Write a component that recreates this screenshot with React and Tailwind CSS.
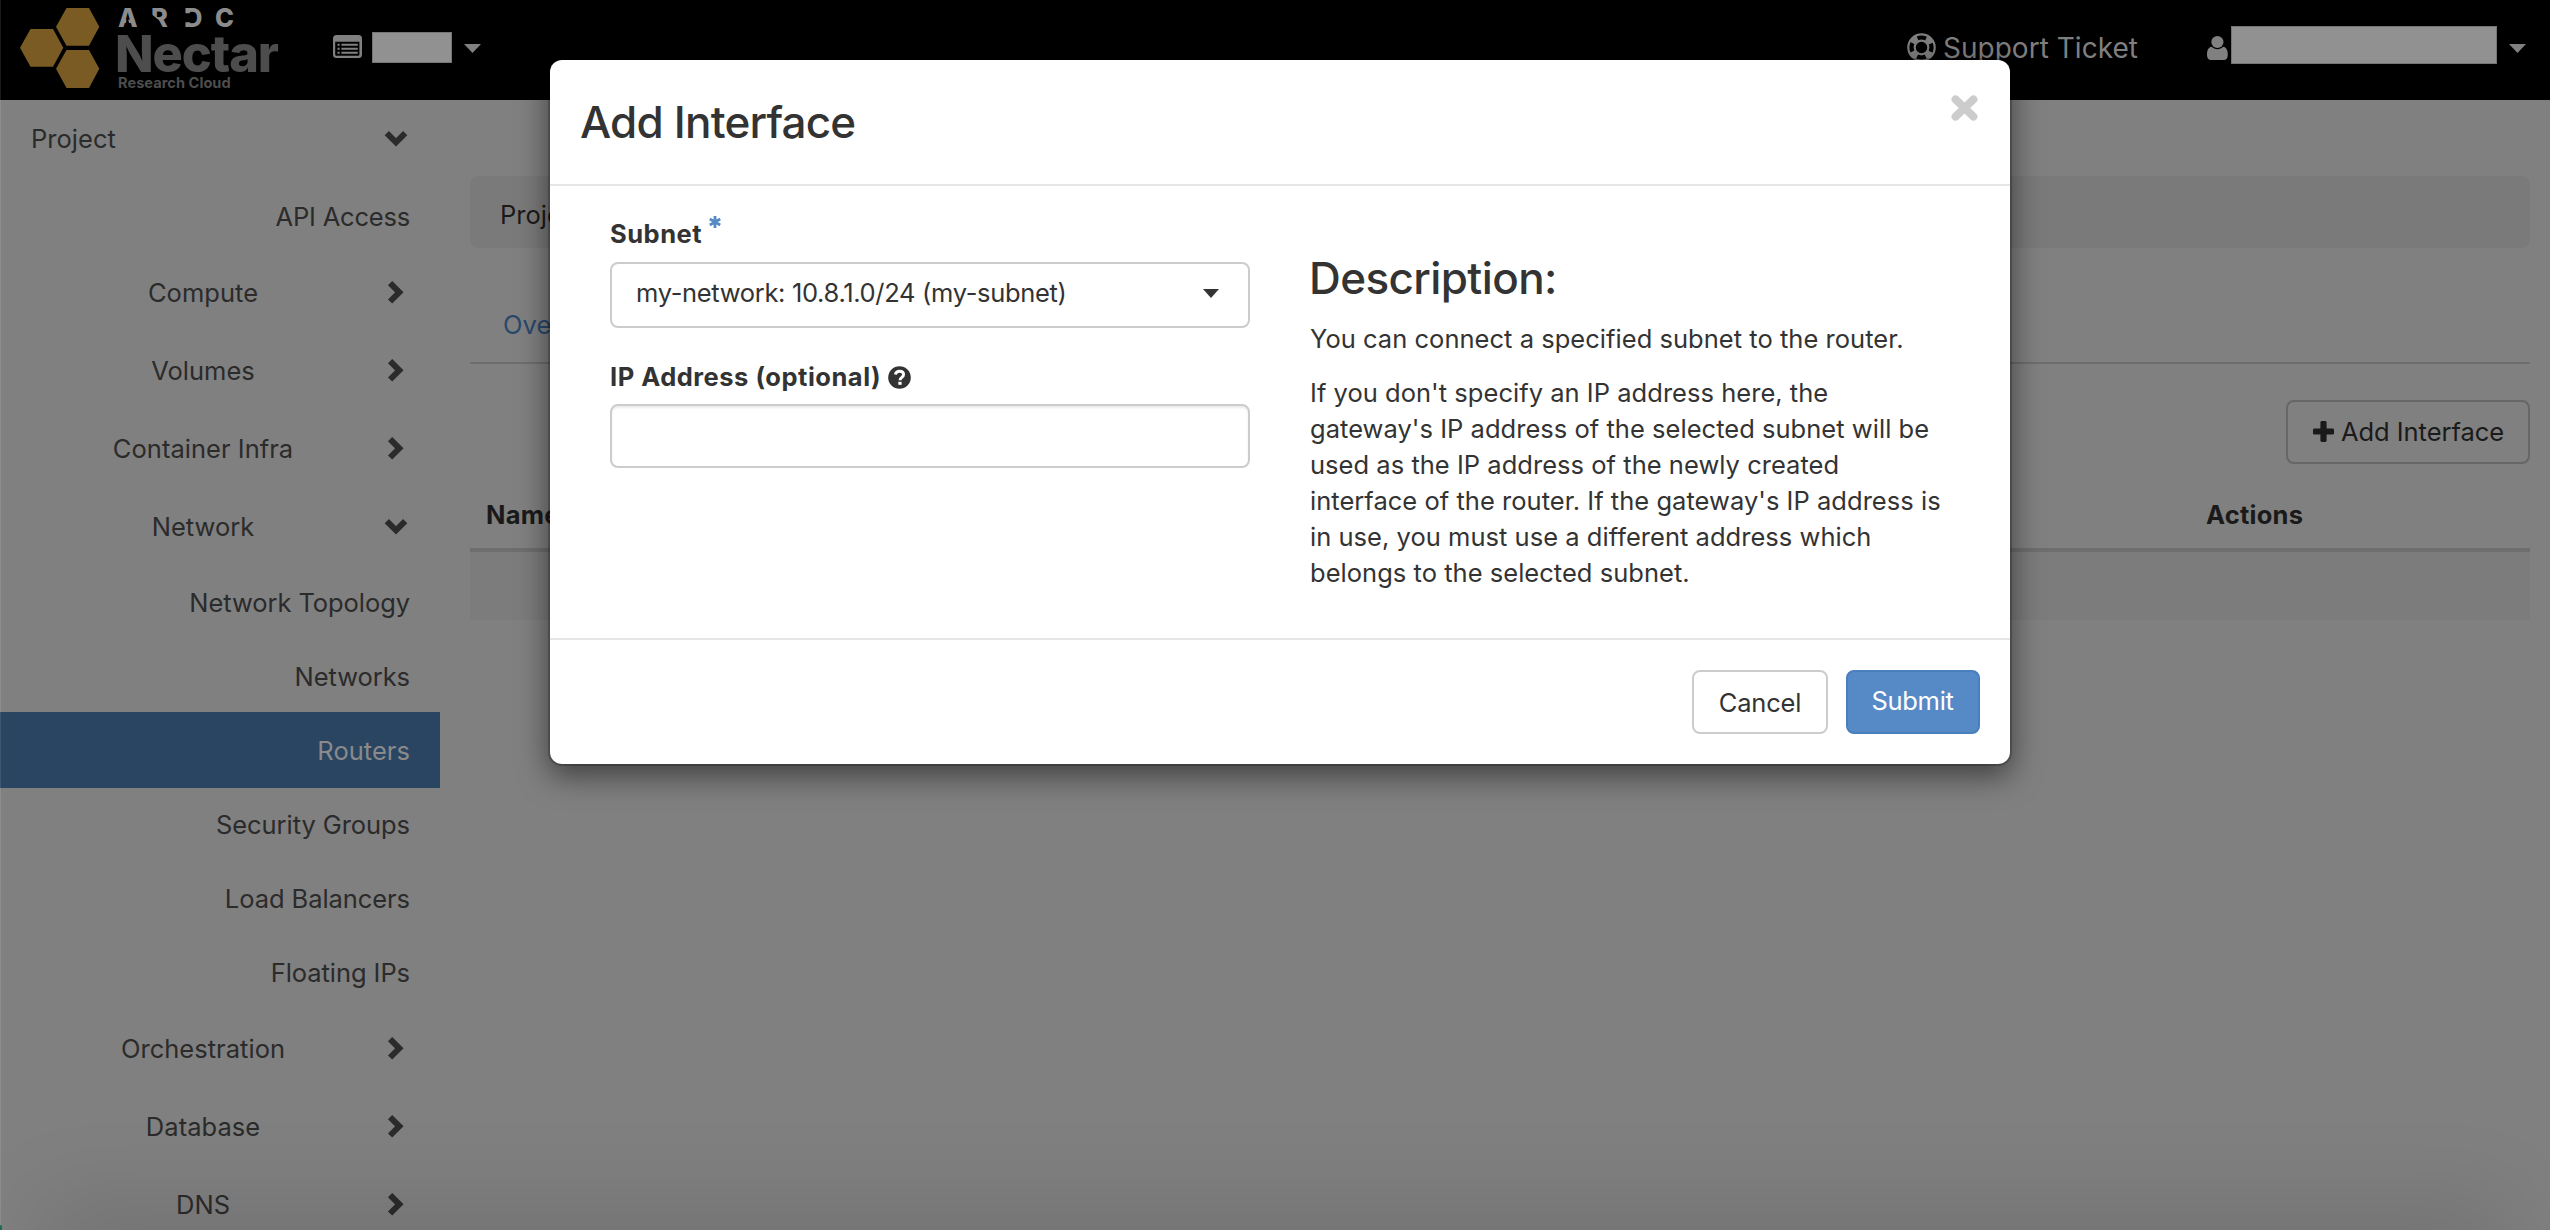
const FONT = "font-['Inter','Liberation_Sans',sans-serif]";

function ChevronRight() {
  return (
    <svg className="ml-2 size-6 shrink-0" viewBox="0 0 24 24" fill="none" stroke="#2b2b2b" strokeWidth="6">
      <path d="M6.1 2.1L15.3 11.3L6.1 20.5" />
    </svg>
  );
}

function ChevronDown() {
  return (
    <svg className="ml-2 size-6 shrink-0" viewBox="0 0 24 24" fill="none" stroke="#2b2b2b" strokeWidth="6">
      <path d="M2.8 6.1L12 15.3L21.2 6.1" />
    </svg>
  );
}

function Group({ label, open }) {
  return (
    <div className="flex h-[78px] shrink-0 items-center">
      <span className="ml-[30px] w-[346px] text-center">{label}</span>
      {open ? <ChevronDown /> : <ChevronRight />}
    </div>
  );
}

function Leaf({ label }) {
  return <div className="flex h-[74px] shrink-0 items-center justify-end pr-[30px] tracking-[-0.07px]">{label}</div>;
}

function Logo() {
  return (
    <div className="flex h-[100px] w-[290px] shrink-0">
      <svg className="ml-5 mt-2 h-[80px] w-[80px] shrink-0" viewBox="0 0 80 80" fill="#7a5b24">
        <path d="M46.5 0H69L79.3 18.8L69 37.8H46.5L36 18.8Z" />
        <path d="M46.5 42H69L79.3 60.8L69 80H46.5L36 60.8Z" />
        <path d="M10.5 21H33L43.3 39.8L33 58.8H10.5L0 39.8Z" />
      </svg>
      <div className="ml-[18px] flex flex-col">
        <div className="mt-[4px] grid h-[27px] grid-cols-[33px_33px_31px_20px] text-[25.5px] font-extrabold leading-[27px] text-[#8c8c8c]">
          <span className="[clip-path:polygon(0_0,100%_0,100%_100%,13px_100%,9.4px_45%,6px_100%,0_100%)]">A</span>
          <span className="[clip-path:polygon(0_0,100%_0,100%_100%,8px_100%,8px_60%,0_36%)]">R</span>
          <span className="[clip-path:polygon(0_0,100%_0,100%_100%,0_100%,0_68%,8px_68%,8px_34%,0_34%)]">D</span>
          <span>C</span>
        </div>
        <div className="-ml-[3px] h-[44px] text-[50.5px] font-extrabold leading-[46px] tracking-[-1.1px] text-[#4d4d4d]">Nectar</div>
        <div className="mt-px whitespace-nowrap text-[14.6px] font-bold leading-[14px] text-[#4d4d4d]">Research Cloud</div>
      </div>
    </div>
  );
}

function Caret({ className, color }) {
  return (
    <svg className={className} viewBox="0 0 17 9" preserveAspectRatio="none" fill={color}>
      <path d="M0 0H17L8.5 9Z" />
    </svg>
  );
}

function Header() {
  return (
    <header className="flex h-[100px] shrink-0 bg-black text-[#7f7f7f]">
      <Logo />
      <svg className="ml-[43px] mt-[35px] h-[23px] w-[29px]" viewBox="0 0 29 23">
        <rect width="29" height="23" rx="3.5" fill="#808080" />
        <path d="M2.2 6.8H26.4V19.6A1.2 1.2 0 0 1 25.2 20.8H3.4A1.2 1.2 0 0 1 2.2 19.6Z" fill="#000" />
        <path d="M4.5 9.8H6.6M8.4 9.8H24.8M4.5 13.8H6.6M8.4 13.8H24.8M4.5 17.8H6.6M8.4 17.8H24.8" stroke="#808080" strokeWidth="2" />
      </svg>
      <div className="ml-[10px] mt-8 h-[31px] w-[80px] border border-[#757575] bg-[#919191]" />
      <Caret className="ml-3 mt-11 h-[9px] w-[17px]" color="#808080" />
      <div className="ml-auto flex">
        <svg className="mt-[33px] size-[29px]" viewBox="0 0 29 29" fill="none" stroke="#7f7f7f">
          <circle cx="14.5" cy="14.5" r="13.2" strokeWidth="2.2" />
          <circle cx="14.5" cy="14.5" r="6.8" strokeWidth="2.2" />
          <circle cx="14.5" cy="14.5" r="10" strokeWidth="6" strokeDasharray="7 8.708" strokeDashoffset="-4.354" />
        </svg>
        <span className="ml-[7px] mt-[30px] whitespace-nowrap text-[28px] leading-[36px]">Support Ticket</span>
        <svg className="ml-[69px] mt-9 h-6 w-[21px]" viewBox="0 0 21 24" fill="#808080">
          <ellipse cx="10.4" cy="6" rx="6.1" ry="6" />
          <path d="M4.6 10.8C6 12.4 8.2 13.2 10.4 13.2S14.8 12.4 16.2 10.8C19.8 11.3 20.8 15 20.8 19C20.8 22 19.4 24 16.6 24H4.2C1.4 24 0 22 0 19C0 15 1 11.3 4.6 10.8Z" />
        </svg>
        <div className="ml-[3px] mt-[26px] h-[38px] w-[266px] border border-[#757575] bg-[#919191]" />
        <Caret className="ml-3 mr-6 mt-11 h-[9px] w-[17px]" color="#808080" />
      </div>
    </header>
  );
}

function Sidebar() {
  return (
    <nav className="flex w-[440px] shrink-0 flex-col text-[#2b2b2b]">
      <div className="flex h-[78px] shrink-0 items-center">
        <span className="ml-[31px] w-[345px]">Project</span>
        <ChevronDown />
      </div>
      <div className="flex h-[76px] shrink-0 items-center justify-end pr-[30px] pt-px tracking-[-0.2px]">API Access</div>
      <Group label="Compute" />
      <Group label="Volumes" />
      <Group label="Container Infra" />
      <Group label="Network" open />
      <Leaf label="Network Topology" />
      <Leaf label="Networks" />
      <div className="-mt-0.5 flex h-[76px] shrink-0 items-center justify-end bg-[#2a4562] pr-[30px] pt-px text-[#8a8a8a]">Routers</div>
      <Leaf label="Security Groups" />
      <Leaf label="Load Balancers" />
      <Leaf label="Floating IPs" />
      <Group label="Orchestration" />
      <Group label="Database" />
      <Group label="DNS" />
    </nav>
  );
}

function Content() {
  return (
    <main className="flex min-w-0 flex-1 flex-col pl-[30px] pr-5 pt-[76px] text-[#1a1a1a]">
      <div className="flex h-[72px] items-center rounded-lg bg-[#7a7a7a] px-[30px] pt-[5px]">Project</div>
      <div className="mt-[38px] flex h-[78px] items-center border-b-2 border-[#6e6e6e] pl-[33px] pt-px text-[#29486c]">Overview</div>
      <div className="mt-9 flex justify-end">
        <div className="flex h-16 w-[244px] items-center rounded-lg border-2 border-[#666] pl-[25px]">
          <svg className="mb-0.5 size-[21px]" viewBox="0 0 21 21" fill="#1a1a1a">
            <rect x="7.4" width="6.2" height="21" rx="1.4" />
            <rect y="7.4" width="21" height="6.2" rx="1.4" />
          </svg>
          <span className="ml-[7px] tracking-[-0.05px]">Add Interface</span>
        </div>
      </div>
      <div className="grid h-[88px] grid-cols-[1720px_1fr] items-center border-b-4 border-[#6e6e6e] pt-[17px] font-bold tracking-[0.25px]">
        <span className="pl-4">Name</span>
        <span className="pl-4">Actions</span>
      </div>
      <div className="h-[68px] bg-[#7c7c7c]" />
    </main>
  );
}

function Modal() {
  return (
    <section className="absolute left-[550px] top-[60px] flex h-[704px] w-[1460px] flex-col rounded-xl bg-white text-[#333] shadow-[0_0_0_2px_rgba(0,0,0,0.2),0_10px_30px_2px_rgba(0,0,0,0.5)]">
      <div className="flex h-[126px] shrink-0 items-center border-b-2 border-[#e5e5e5] pl-[30px] pr-8">
        <h2 className="text-[44px] font-medium leading-[48px] tracking-[-0.8px]">Add Interface</h2>
        <svg className="ml-auto mt-[35px] h-[26px] w-[27px] self-start" viewBox="0 0 27 26" stroke="#ccc" strokeWidth="8" strokeLinecap="round">
          <path d="M4.6 4.4L22.4 21.6M22.4 4.4L4.6 21.6" />
        </svg>
      </div>
      <div className="flex h-[452px] shrink-0 pl-[60px]">
        <div className="w-[640px] pt-[30px]">
          <div className="flex h-9 font-bold leading-9">
            <span className="tracking-[0.5px]">Subnet</span>
            <svg className="ml-[7px] size-[12px]" viewBox="0 0 12 12" stroke="#558ac6" strokeWidth="2.8">
              <path d="M6 0V12M0.8 3L11.2 9M11.2 3L0.8 9" />
            </svg>
          </div>
          <div className="mt-[10px] flex h-[66px] items-center rounded-lg border-2 border-[#ccc] pb-1 pl-6 pr-[29px]">
            <span className="tracking-[-0.33px]">my-network: 10.8.1.0/24 (my-subnet)</span>
            <Caret className="ml-auto h-[9px] w-4" color="#333" />
          </div>
          <div className="mt-[31px] flex h-9 items-center font-bold leading-9">
            <span className="tracking-[0.5px]">IP Address (optional)</span>
            <svg className="ml-[7px] size-[23px]" viewBox="0 0 23 23">
              <circle cx="11.5" cy="11.5" r="11.3" fill="#333" />
              <path d="M7.4 8.6C7.8 6.3 9.4 5.2 11.6 5.2C14 5.2 15.6 6.6 15.6 8.5C15.6 11.4 12 11.4 12 14.2" fill="none" stroke="#fff" strokeWidth="2.9" />
              <rect x="10.3" y="15.8" width="3.3" height="3" fill="#fff" />
            </svg>
          </div>
          <div className="mt-[9px] h-16 rounded-lg border-2 border-[#ccc] shadow-[inset_0_2px_2px_rgba(0,0,0,0.075)]" />
        </div>
        <div className="ml-[60px] w-[636px] pt-[68px]">
          <h3 className="-ml-px text-[44px] font-medium leading-[48px] tracking-[-0.6px]">Description:</h3>
          <p className="mt-[19px] leading-9">You can connect a specified subnet to the router.</p>
          <p className="mt-[18px] leading-9">
            If you don't specify an IP address here, the gateway's IP address of the selected subnet will be used as the IP
            address of the newly created interface of the router. If the gateway's IP address is in use, you must use a
            different address which belongs to the selected subnet.
          </p>
        </div>
      </div>
      <div className="flex flex-1 justify-end gap-[18px] border-t-2 border-[#e5e5e5] pr-[30px] pt-[30px]">
        <button className="flex h-16 w-[136px] items-center justify-center rounded-lg border-2 border-[#ccc] pt-px tracking-[-0.2px]">Cancel</button>
        <button className="flex h-16 w-[134px] items-center justify-center rounded-lg border-2 border-[#487fbd] bg-[#558ac6] pb-0.5 pr-px tracking-[-0.3px] text-white">Submit</button>
      </div>
    </section>
  );
}

export default function App() {
  return (
    <div className={`relative flex h-[1230px] w-[2550px] flex-col overflow-hidden bg-[#808080] text-[25.5px] leading-[36px] tracking-[0.03px] ${FONT}`}>
      <Header />
      <div className="flex min-h-0 flex-1">
        <Sidebar />
        <Content />
      </div>
      <div className="absolute -bottom-10 left-[70px] right-[70px] h-10 shadow-[0_0_90px_30px_rgba(0,0,0,0.11)]" />
      <div className="absolute inset-y-0 left-0 w-px bg-white/10" />
      <div className="absolute bottom-0 left-0 h-[5px] w-[2px] rounded-tr-full bg-[#1f6b50]" />
      <Modal />
    </div>
  );
}
